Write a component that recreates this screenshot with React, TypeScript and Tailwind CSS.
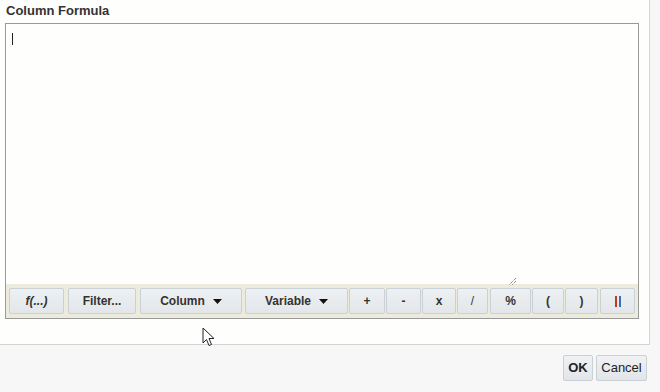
const btn =
  "shrink-0 h-[26px] flex items-center justify-center rounded-[2px] border border-[#c9d0d6] bg-[linear-gradient(#eef1f3,#e2e6ea)] text-[12px] font-bold text-[#333]";

function Caret() {
  return (
    <svg width="9" height="5" viewBox="0 0 9 5" className="ml-[8px]">
      <path d="M0 0h9L4.5 5z" fill="#111" />
    </svg>
  );
}

export default function App() {
  return (
    <div className="relative w-[660px] h-[392px] bg-[#f7f7f7] font-['Liberation_Sans',Arial,sans-serif] overflow-hidden">
      <div className="w-[650px] h-[345px] bg-[#fefefd] border-r border-b border-[#d4d4d4] pt-[4px] pl-[5px]">
        <div className="pl-[1px] text-[13px] font-bold leading-[14px] text-[#333]">Column Formula</div>
        <div className="mt-[5px] w-[634px] h-[296px] border border-[#999] flex flex-col">
          <div className="relative flex-1">
            <div className="absolute left-[6px] top-[9px] w-px h-[12px] bg-[#222]" />
            <svg className="absolute left-[502px] top-[253px]" width="9" height="9" viewBox="0 0 9 9">
              <path d="M8 1L1 8M8 4L4 8" stroke="#555" strokeWidth="1" strokeDasharray="1 1" />
            </svg>
          </div>
          <div className="h-[34px] bg-[#ecebdc] flex items-center gap-[4px] px-[3px]">
            <div className={btn + " w-[55px] italic"}>f(...)</div>
            <div className={btn + " w-[68px]"}>Filter...</div>
            <div className={btn + " w-[102px]"}>
              Column <Caret />
            </div>
            <div className={btn + " w-[103px] -ml-px"}>
              Variable <Caret />
            </div>
            <div className="flex gap-[1px] -ml-[3px]">
              <div className={btn + " w-[36px]"}>+</div>
              <div className={btn + " w-[35px]"}>-</div>
              <div className={btn + " w-[34px]"}>x</div>
              <div className={btn + " w-[31px] text-[#7a3f6a] font-normal"}>/</div>
              <div className={btn + " w-[41px] ml-px text-[#1f4f8f]"}>%</div>
              <div className={btn + " w-[32px]"}>(</div>
              <div className={btn + " w-[33px]"}>)</div>
              <div className={btn + " w-[35px] ml-px gap-[2px]"}>
                <span className="w-[2px] h-[11px] bg-[#c0392b]" />
                <span className="w-[2px] h-[11px] bg-[#3a6fb5]" />
              </div>
            </div>
          </div>
        </div>
      </div>
      <div className="flex justify-end gap-[3px] pr-[13px] pt-[10px]">
        <div className="w-[30px] h-[26px] flex items-center justify-center border border-[#c9d0d6] rounded-[2px] bg-[linear-gradient(#f0f2f4,#e1e5e9)] text-[13px] font-bold text-[#222]">
          OK
        </div>
        <div className="w-[51px] h-[26px] flex items-center justify-center border border-[#c9d0d6] rounded-[2px] bg-[linear-gradient(#f0f2f4,#e1e5e9)] text-[13px] text-[#222]">
          Cancel
        </div>
      </div>
      <svg className="absolute left-[202px] top-[327px]" width="14" height="20" viewBox="0 0 14 20">
        <path d="M1 1v15l3.5-3.5 2.5 6 2.5-1-2.5-6H12z" fill="#fff" stroke="#222" strokeWidth="1" strokeLinejoin="round" />
      </svg>
    </div>
  );
}
